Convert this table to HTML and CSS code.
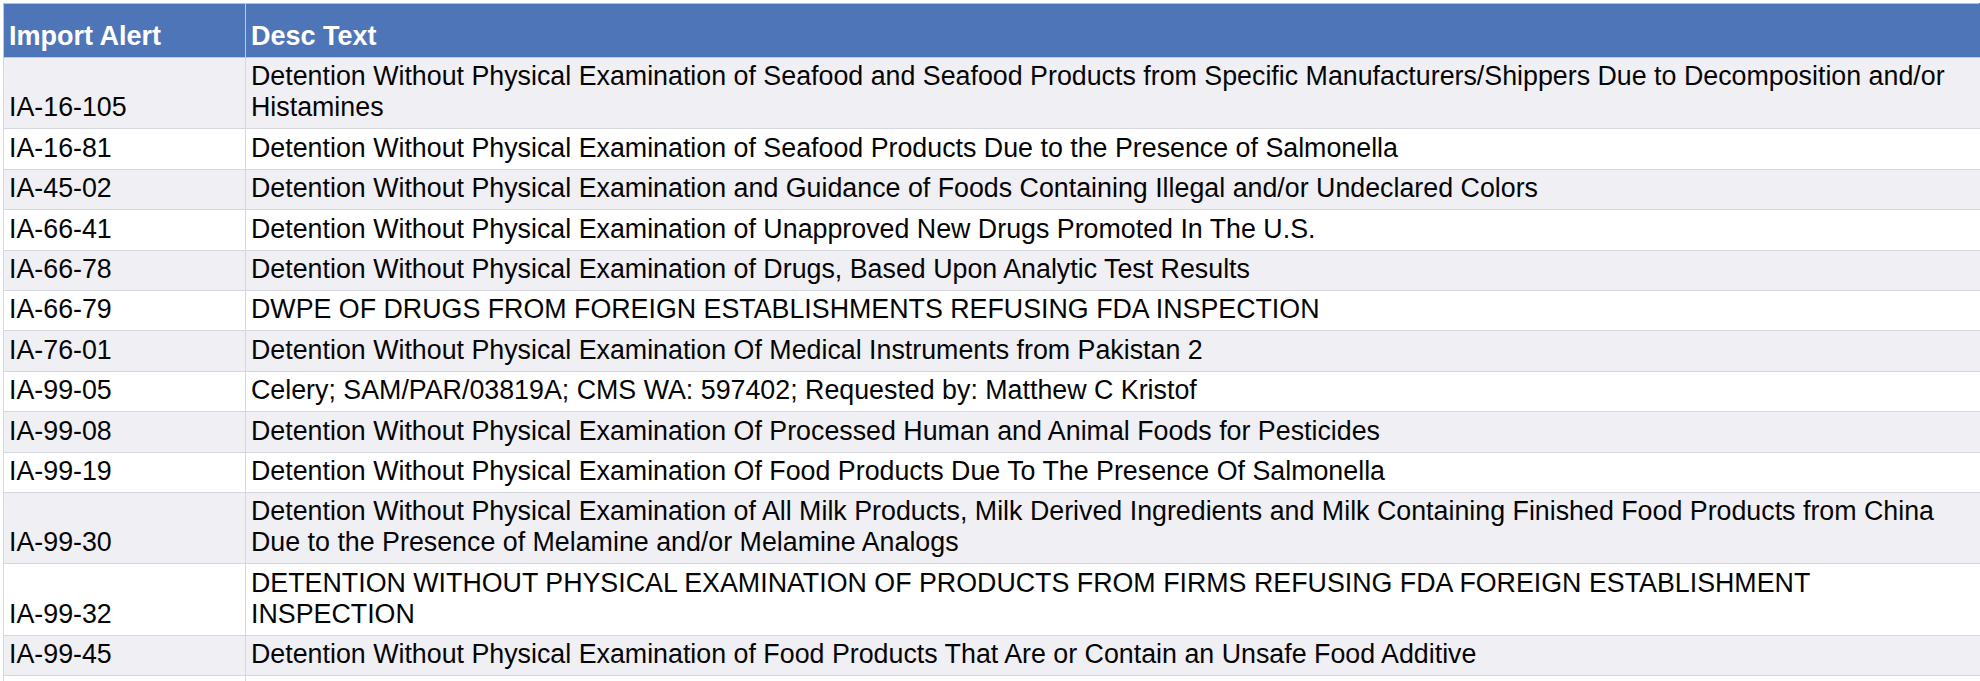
FILE: index.html
```html
<!DOCTYPE html>
<html>
<head>
<meta charset="utf-8">
<link rel="stylesheet" href="styles.css">
</head>
<body>
<table class="sheet">
  <thead>
    <tr><th class="c1">Import Alert</th><th class="c2">Desc Text</th></tr>
  </thead>
  <tbody>
    <tr class="alt"><td>IA-16-105</td><td>Detention Without Physical Examination of Seafood and Seafood Products from Specific Manufacturers/Shippers Due to Decomposition and/or<br>Histamines</td></tr>
    <tr><td>IA-16-81</td><td>Detention Without Physical Examination of Seafood Products Due to the Presence of Salmonella</td></tr>
    <tr class="alt"><td>IA-45-02</td><td>Detention Without Physical Examination and Guidance of Foods Containing Illegal and/or Undeclared Colors</td></tr>
    <tr><td>IA-66-41</td><td>Detention Without Physical Examination of Unapproved New Drugs Promoted In The U.S.</td></tr>
    <tr class="alt"><td>IA-66-78</td><td>Detention Without Physical Examination of Drugs, Based Upon Analytic Test Results</td></tr>
    <tr><td>IA-66-79</td><td>DWPE OF DRUGS FROM FOREIGN ESTABLISHMENTS REFUSING FDA INSPECTION</td></tr>
    <tr class="alt"><td>IA-76-01</td><td>Detention Without Physical Examination Of Medical Instruments from Pakistan 2</td></tr>
    <tr><td>IA-99-05</td><td>Celery; SAM/PAR/03819A; CMS WA: 597402; Requested by: Matthew C Kristof</td></tr>
    <tr class="alt"><td>IA-99-08</td><td>Detention Without Physical Examination Of Processed Human and Animal Foods for Pesticides</td></tr>
    <tr><td>IA-99-19</td><td>Detention Without Physical Examination Of Food Products Due To The Presence Of Salmonella</td></tr>
    <tr class="alt"><td>IA-99-30</td><td>Detention Without Physical Examination of All Milk Products, Milk Derived Ingredients and Milk Containing Finished Food Products from China<br>Due to the Presence of Melamine and/or Melamine Analogs</td></tr>
    <tr><td>IA-99-32</td><td>DETENTION WITHOUT PHYSICAL EXAMINATION OF PRODUCTS FROM FIRMS REFUSING FDA FOREIGN ESTABLISHMENT<br>INSPECTION</td></tr>
    <tr class="alt"><td>IA-99-45</td><td>Detention Without Physical Examination of Food Products That Are or Contain an Unsafe Food Additive</td></tr>
    <tr><td>&nbsp;</td><td>&nbsp;</td></tr>
  </tbody>
</table>
</body>
</html>
```

FILE: styles.css
```css
html, body {
  margin: 0;
  padding: 0;
  background: #ffffff;
  overflow: hidden;
}

body {
  padding: 3px 0 0 3px;
  font-family: "Liberation Sans", Arial, Helvetica, sans-serif;
}

.sheet {
  border-collapse: collapse;
  width: 1977px;
  table-layout: fixed;
  font-size: 26.8px;
  line-height: 31px;
  color: #050505;
}

.sheet .c1 { width: 231px; }

.sheet th,
.sheet td {
  border: 1px solid #d6d6df;
  padding: 3.4px 5px 5px 5px;
  vertical-align: bottom;
  text-align: left;
  white-space: nowrap;
  overflow: hidden;
}

.sheet th {
  background: #4f75b9;
  color: #ffffff;
  font-weight: bold;
  font-size: 27px;
  padding-top: 17px;
  padding-bottom: 5px;
  border-color: #c2c7d6;
  border-top: 1px solid #bcc0cc;
}

.sheet th.c2 { border-right-color: #4f75b9; }

.sheet td:last-child { border-right: none; }

.sheet tr.alt td { background: #efeff4; }
```
